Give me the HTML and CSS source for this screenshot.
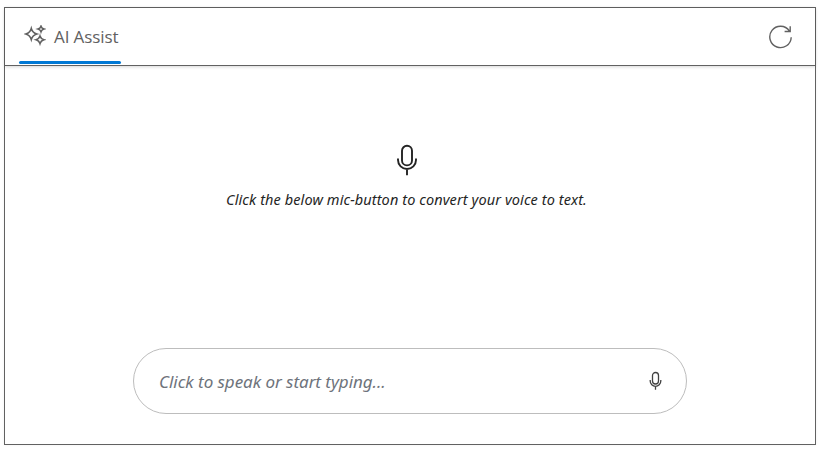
FILE: index.html
```html
<!DOCTYPE html>
<html lang="en">
<head>
<meta charset="utf-8">
<title>AI Assist</title>
<link rel="stylesheet" href="styles.css">
</head>
<body>
<main class="assist">
  <header class="toolbar">
    <div class="tab">
      <svg class="sparkle" width="22" height="22" viewBox="0 0 22 22">
        <path d="M7.3 3.5Q8.5 7.7 12.8 9Q8.5 10.3 7.3 14.5Q6.1 10.3 1.8 9Q6.1 7.7 7.3 3.5Z"/>
        <path d="M17 1.2Q17.7 3.3 20 4Q17.7 4.7 17 6.8Q16.3 4.7 14 4Q16.3 3.3 17 1.2Z"/>
        <path d="M16 11Q16.9 13.9 19.9 14.8Q16.9 15.7 16 18.6Q15.1 15.7 12.1 14.8Q15.1 13.9 16 11Z"/>
      </svg>
      <span class="tab-label">AI Assist</span>
    </div>
    <button class="refresh" aria-label="Refresh">
      <svg width="26" height="26" viewBox="0 0 26 26">
        <path d="M23.2 13.2A10.7 10.7 0 1 1 21.3 6.8M22.2 2.2V7.5H16.6"/>
      </svg>
    </button>
  </header>
  <section class="banner">
    <svg class="mic-large" width="20" height="32" viewBox="0 0 20 32">
      <rect x="5" y="1.8" width="10" height="19.6" rx="5"/>
      <path d="M1 14.5V16A9 9 0 0 0 19 16V14.5M10 25V31.3"/>
    </svg>
    <p class="hint">Click the below mic-button to convert your voice to text.</p>
  </section>
  <div class="prompt">
    <input class="prompt-input" type="text" placeholder="Click to speak or start typing...">
    <button class="mic-button" aria-label="Speak">
      <svg width="13" height="20" viewBox="0 0 13 20">
        <rect x="3.5" y="1.5" width="6" height="11.5" rx="3"/>
        <path d="M1.2 9V10A5.3 5.3 0 0 0 11.8 10V9M6.5 15.2V18.7"/>
      </svg>
    </button>
  </div>
</main>
</body>
</html>
```

FILE: styles.css
```css
* {
  box-sizing: border-box;
}

body {
  margin: 0;
  padding: 7px 4px 6px;
  background: #fff;
  font-family: "Noto Sans", "Open Sans", sans-serif;
}

.assist {
  display: flex;
  flex-direction: column;
  width: 812px;
  height: 438px;
  border: 1px solid #616161;
  box-shadow: 0 0 3px rgba(0, 0, 0, 0.06);
}

.toolbar {
  display: flex;
  justify-content: space-between;
  height: 58px;
  padding: 0 21px 0 14px;
  border-bottom: 1px solid #616161;
  box-shadow: 0 1px 3px rgba(0, 0, 0, 0.16);
}

.tab {
  display: flex;
  align-items: center;
  gap: 8px;
  width: 102px;
  height: 56px;
  padding: 0 0 0 5px;
  position: relative;
}

.tab::after {
  content: "";
  position: absolute;
  left: 0;
  bottom: 0;
  width: 102px;
  height: 3px;
  border-radius: 2px;
  background: #0078d4;
}

svg {
  display: block;
  flex: none;
  fill: none;
  stroke: #616161;
  stroke-width: 1.4;
}

.sparkle {
  stroke-width: 1.6;
}

.tab-label {
  color: #616161;
  font-family: "Open Sans", "Noto Sans", sans-serif;
  font-size: 17px;
  letter-spacing: -0.1px;
  white-space: nowrap;
}

button {
  padding: 0;
  border: 0;
  background: none;
}

.banner {
  display: flex;
  flex: 1;
  flex-direction: column;
  align-items: center;
  padding: 78px 7px 0 0;
}

.mic-large {
  stroke: #242424;
  stroke-width: 1.9;
}

.hint {
  margin: 13px 0 0;
  color: #242424;
  font-size: 14.5px;
  font-style: italic;
  letter-spacing: 0.1px;
  line-height: 20px;
  white-space: nowrap;
}

.prompt {
  display: flex;
  align-items: center;
  width: 554px;
  height: 66px;
  margin: 0 0 30px 128px;
  padding: 0 24px 0 25px;
  border: 1px solid #bdbdbd;
  border-radius: 33px;
}

.prompt-input {
  flex: 1;
  padding: 0;
  border: 0;
  outline: 0;
  background: none;
  font: italic 17px "Noto Sans", "Open Sans", sans-serif;
  letter-spacing: -0.04px;
}

.prompt-input::placeholder {
  color: #6e737b;
}

.mic-button svg {
  stroke: #424242;
  stroke-width: 1.3;
}
```
